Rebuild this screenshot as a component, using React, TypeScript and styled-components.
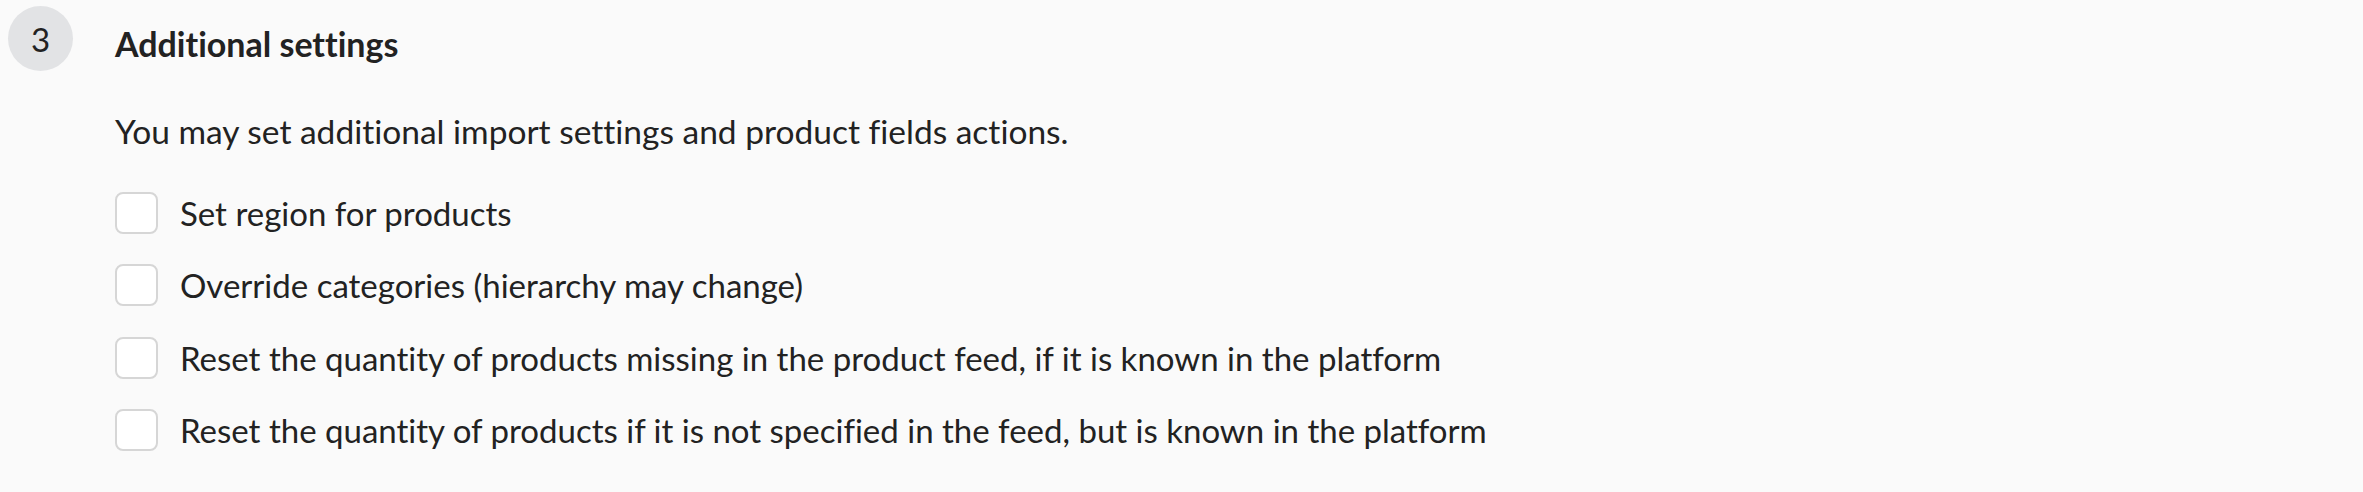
import React from 'react';
import styled, { createGlobalStyle } from 'styled-components';

const GlobalStyle = createGlobalStyle`
  html, body {
    margin: 0;
    padding: 0;
    background: #fafafa;
  }
  body {
    font-family: 'Lato', 'Liberation Sans', sans-serif;
    font-variant-ligatures: none;
    color: #222222;
  }
`;

const options = [
  'Set region for products',
  'Override categories (hierarchy may change)',
  'Reset the quantity of products missing in the product feed, if it is known in the platform',
  'Reset the quantity of products if it is not specified in the feed, but is known in the platform',
];

export default function App() {
  return (
    <>
      <GlobalStyle />
      <Page>
        <Step>
          <StepNumber>3</StepNumber>
          <StepBody>
            <StepTitle>Additional settings</StepTitle>
            <StepDescription>
              You may set additional import settings and product fields actions.
            </StepDescription>
            <OptionList>
              {options.map((label) => (
                <OptionRow key={label}>
                  <Checkbox type="checkbox" />
                  <OptionLabel>{label}</OptionLabel>
                </OptionRow>
              ))}
            </OptionList>
          </StepBody>
        </Step>
      </Page>
    </>
  );
}

const Page = styled.div`
  width: 2363px;
  height: 492px;
  box-sizing: border-box;
  padding: 6px 0 0 8px;
  background: #fafafa;
`;

const Step = styled.section`
  display: flex;
  align-items: flex-start;
  gap: 42px;
`;

const StepNumber = styled.div`
  flex: none;
  width: 65px;
  height: 65px;
  border-radius: 50%;
  background: #e2e3e5;
  color: #222222;
  font-size: 33px;
  display: flex;
  align-items: center;
  justify-content: center;
`;

const StepBody = styled.div`
  display: flex;
  flex-direction: column;
`;

const StepTitle = styled.h3`
  margin: 16px 0 0;
  font-size: 34px;
  font-weight: 700;
  line-height: 44px;
`;

const StepDescription = styled.p`
  margin: 43px 0 0;
  font-size: 33.5px;
  line-height: 44px;
`;

const OptionList = styled.div`
  margin-top: 39px;
  display: flex;
  flex-direction: column;
  gap: 30.3px;
`;

const OptionRow = styled.label`
  display: flex;
  align-items: center;
  gap: 22px;
  height: 42px;
`;

const Checkbox = styled.input`
  appearance: none;
  margin: 0;
  flex: none;
  width: 43px;
  height: 42px;
  box-sizing: border-box;
  border: 2px solid #d6d6d6;
  border-radius: 8px;
  background: #ffffff;
`;

const OptionLabel = styled.span`
  font-size: 33px;
  line-height: 44px;
`;
